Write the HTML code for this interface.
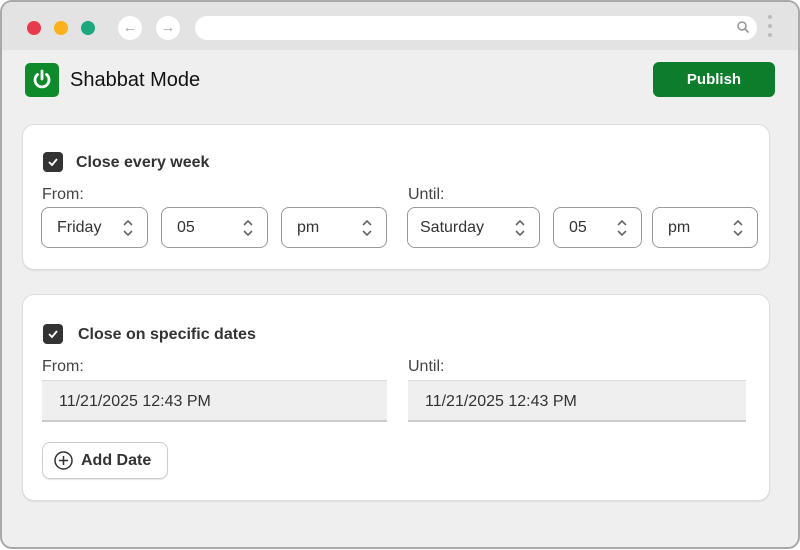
<!DOCTYPE html><html><head><style>
*{box-sizing:border-box;margin:0;padding:0}
body{width:800px;height:550px;background:#fff;font-family:"Liberation Sans",sans-serif;position:relative;overflow:hidden}
.win{position:absolute;left:0;top:0;width:800px;height:549px;border:2px solid #a9a9a9;border-radius:12px;background:#efefef;overflow:hidden}
.bar{position:absolute;left:0;top:0;width:100%;height:48px;background:#e3e3e3}
.dot{position:absolute;top:19px;width:14px;height:14px;border-radius:50%}
.nav{position:absolute;top:14px;width:24px;height:24px;border-radius:50%;background:#fff;color:#aaa;font-size:15px;text-align:center;line-height:23px}
.url{position:absolute;left:193px;top:14px;width:562px;height:24px;border-radius:12px;background:#fff}
.abs{position:absolute}
.card{position:absolute;left:20px;width:748px;background:#fff;border:1px solid #ddd;border-radius:12px;box-shadow:0 1px 1px rgba(0,0,0,.08)}
.sel{position:absolute;height:41px;border:1px solid #999;border-radius:8px;background:#fff;font-size:16px;color:#333;padding-left:15px;line-height:39px}
.sel svg{position:absolute;right:13px;top:12px}
.lbl{position:absolute;font-size:16px;color:#444}
.cb{position:absolute;width:20px;height:20px;border-radius:4px;background:#333}
.ttl{position:absolute;font-size:16px;font-weight:bold;color:#333}
.date{position:absolute;height:42px;background:#efefef;border-top:1px solid #ddd;border-bottom:2px solid #ccc;font-size:16px;color:#333;padding-left:17px;line-height:42px}
</style></head><body>
<div class="win">
<div class="bar"></div>
<div class="dot" style="left:25px;background:#e8394d"></div>
<div class="dot" style="left:52px;background:#fbb11a"></div>
<div class="dot" style="left:79px;background:#1aa87f"></div>
<div class="nav" style="left:116px">←</div>
<div class="nav" style="left:154px">→</div>
<div class="url"></div>
<svg class="abs" style="left:734px;top:18px" width="14" height="14" viewBox="0 0 14 14"><circle cx="6" cy="6" r="4" fill="none" stroke="#999" stroke-width="1.6"/><path d="M9 9l3.5 3.5" stroke="#999" stroke-width="1.8"/></svg>
<div class="abs" style="left:766px;top:13px;width:4px;height:4px;border-radius:50%;background:#bbb;box-shadow:0 9px 0 #bbb,0 18px 0 #bbb"></div>
<div class="abs" style="left:23px;top:61px;width:34px;height:34px;border-radius:5px;background:#0e8a2a"></div>
<svg class="abs" style="left:28px;top:66px" width="24" height="24" viewBox="0 0 24 24"><path d="M7.5 6.5A7 7 0 1 0 16.5 6.5" fill="none" stroke="#fff" stroke-width="2.8" stroke-linecap="round"/><path d="M12 3v8" stroke="#fff" stroke-width="2.8" stroke-linecap="round"/></svg>
<div class="abs" style="left:68px;top:67px;font-size:20px;color:#111">Shabbat Mode</div>
<div class="abs" style="left:651px;top:60px;width:122px;height:35px;border-radius:6px;background:#0c7d2b;color:#fff;font-weight:bold;font-size:15px;text-align:center;line-height:35px">Publish</div>

<div class="card" style="top:122px;height:146px"></div>
<div class="cb" style="left:41px;top:150px"></div>
<svg class="abs" style="left:44px;top:153px" width="14" height="14"><path d="M3 7l3 3 5-6" fill="none" stroke="#fff" stroke-width="1.8"/></svg>
<div class="ttl" style="left:74px;top:152px">Close every week</div>
<div class="lbl" style="left:40px;top:184px">From:</div>
<div class="lbl" style="left:406px;top:184px">Until:</div>

<div class="card" style="top:292px;height:207px"></div>
<div class="cb" style="left:41px;top:322px"></div>
<svg class="abs" style="left:44px;top:325px" width="14" height="14"><path d="M3 7l3 3 5-6" fill="none" stroke="#fff" stroke-width="1.8"/></svg>
<div class="ttl" style="left:76px;top:324px">Close on specific dates</div>
<div class="lbl" style="left:40px;top:356px">From:</div>
<div class="lbl" style="left:406px;top:356px">Until:</div>
<div class="date" style="left:40px;top:378px;width:345px">11/21/2025 12:43 PM</div>
<div class="date" style="left:406px;top:378px;width:338px">11/21/2025 12:43 PM</div>
<div class="abs" style="left:40px;top:440px;width:126px;height:37px;border:1px solid #ccc;border-radius:8px;background:#fff;box-shadow:0 1px 1px rgba(0,0,0,.1)"></div>
<svg class="abs" style="left:51px;top:448px" width="21" height="21"><circle cx="10.5" cy="10.5" r="8.5" fill="none" stroke="#333" stroke-width="1.5"/><path d="M10.5 6v9M6 10.5h9" stroke="#333" stroke-width="1.5"/></svg>
<div class="abs" style="left:79px;top:450px;font-size:16px;font-weight:bold;color:#333">Add Date</div>
</div>
<svg width="0" height="0"><defs><g id="ch"><path d="M2 5l4-4 4 4M2 11l4 4 4-4" fill="none" stroke="#666" stroke-width="1.6"/></g></defs></svg>
<div class="sel" style="left:41px;top:207px;width:107px">Friday<svg width="12" height="16"><use href="#ch"/></svg></div>
<div class="sel" style="left:161px;top:207px;width:107px">05<svg width="12" height="16"><use href="#ch"/></svg></div>
<div class="sel" style="left:281px;top:207px;width:106px">pm<svg width="12" height="16"><use href="#ch"/></svg></div>
<div class="sel" style="left:407px;top:207px;width:133px;padding-left:12px">Saturday<svg width="12" height="16"><use href="#ch"/></svg></div>
<div class="sel" style="left:553px;top:207px;width:89px">05<svg width="12" height="16"><use href="#ch"/></svg></div>
<div class="sel" style="left:652px;top:207px;width:106px">pm<svg width="12" height="16"><use href="#ch"/></svg></div>
</body></html>
